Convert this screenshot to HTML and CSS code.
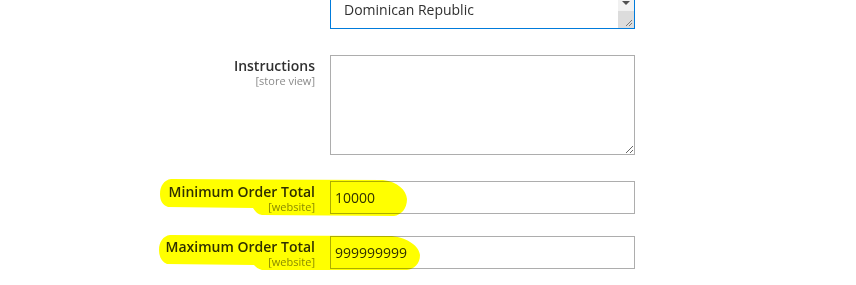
FILE: index.html
```html
<!DOCTYPE html>
<html lang="en">
<head>
  <meta charset="UTF-8" />
  <title>Payment Method Settings</title>
  <link rel="stylesheet" href="styles.css">
</head>
<body>
  <div class="page">
    <form class="config-form">

      <div class="field field-countries">
        <div class="field-label"></div>
        <div class="control">
          <div class="multiselect">
            <ul class="options">
              <li>Dominican Republic</li>
            </ul>
            <div class="scrollbar">
              <span class="scroll-arrow"></span>
              <span class="scroll-corner">
                <svg width="16" height="17" viewBox="0 0 16 17">
                  <line x1="14" y1="9" x2="8" y2="15" stroke="#7a7a7a" stroke-width="1"/>
                  <line x1="14" y1="12" x2="11" y2="15" stroke="#7a7a7a" stroke-width="1"/>
                </svg>
              </span>
            </div>
          </div>
        </div>
      </div>

      <div class="field field-textarea">
        <label class="field-label" for="instructions">
          <span class="label-text">Instructions</span>
          <span class="scope">[store view]</span>
        </label>
        <div class="control">
          <textarea id="instructions" class="textarea"></textarea>
        </div>
      </div>

      <div class="field">
        <label class="field-label" for="min-total">
          <span class="label-text">Minimum Order Total</span>
          <span class="scope">[website]</span>
        </label>
        <div class="control">
          <input id="min-total" class="input" type="text" value="10000">
        </div>
      </div>

      <div class="field">
        <label class="field-label" for="max-total">
          <span class="label-text">Maximum Order Total</span>
          <span class="scope">[website]</span>
        </label>
        <div class="control">
          <input id="max-total" class="input" type="text" value="999999999">
        </div>
      </div>

    </form>

    <!-- marker highlights drawn over the screenshot -->
    <svg class="marker" width="856" height="285" viewBox="0 0 856 285">
      <path d="M171 179 L383 180 C398 182 406 190 407 199 C407 209 401 215 394 216 L262 215 C257 214 255 211 253 208 L168 207 C162 205 160 200 160 194 C160 186 164 180 171 179 Z"/>
      <path d="M170 235 L392 236 C408 238 419 246 420 255 C420 264 414 269 407 270 L262 270 C258 269 256 267 254 265 L167 264 C162 262 159 257 159 250 C159 242 163 236 170 235 Z"/>
    </svg>
  </div>
</body>
</html>
```

FILE: styles.css
```css
body {
  margin: 0;
  background: #fff;
  font-family: "Open Sans", "Liberation Sans", sans-serif;
  color: #303030;
}
.page {
  position: relative;
  isolation: isolate;
  width: 856px;
  height: 285px;
  overflow: hidden;
  background: #fff;
}
.config-form {
  display: flex;
  flex-direction: column;
}
.field {
  display: flex;
  align-items: flex-start;
  gap: 15px;
  margin-bottom: 22px;
}
.field-countries {
  margin-top: -71px;
  margin-bottom: 26px;
}
.field-textarea {
  margin-bottom: 26px;
}
.field-label {
  width: 315px;
  flex: none;
  text-align: right;
  padding-top: 1px;
}
.label-text {
  display: block;
  font-size: 14px;
  font-weight: 600;
  line-height: 19px;
}
.scope {
  display: block;
  font-size: 11px;
  line-height: 11px;
  color: #8a8a8a;
}
.control {
  width: 305px;
  flex: none;
}

/* country multiselect, scrolled to the end */
.multiselect {
  height: 100px;
  box-sizing: border-box;
  border: 1px solid #007bdb;
  display: flex;
  background: #fff;
}
.options {
  flex: 1;
  list-style: none;
  margin: 0;
  padding: 0 13px 8px;
  display: flex;
  flex-direction: column;
  justify-content: flex-end;
  font-size: 14px;
  line-height: 20px;
}
.scrollbar {
  width: 16px;
  background: #f1f1f1;
  display: flex;
  flex-direction: column;
  justify-content: flex-end;
  align-items: center;
}
.scroll-arrow {
  width: 0;
  height: 0;
  border-left: 4px solid transparent;
  border-right: 4px solid transparent;
  border-top: 4px solid #505050;
  margin-bottom: 6px;
}
.scroll-corner {
  display: block;
  width: 16px;
  height: 17px;
  background: #dcdcdc;
}
.scroll-corner svg {
  display: block;
}

.textarea {
  display: block;
  width: 305px;
  height: 100px;
  box-sizing: border-box;
  margin: 0;
  border: 1px solid #adadad;
  border-radius: 0;
  font-family: inherit;
  font-size: 14px;
}
.input {
  display: block;
  width: 305px;
  height: 33px;
  box-sizing: border-box;
  margin: 0;
  padding: 0 4px;
  border: 1px solid #adadad;
  border-radius: 0;
  font-family: inherit;
  font-size: 14px;
  color: #303030;
}

.marker {
  position: absolute;
  top: 0;
  left: 0;
  pointer-events: none;
  mix-blend-mode: multiply;
}
.marker path {
  fill: #ffff00;
}
```
